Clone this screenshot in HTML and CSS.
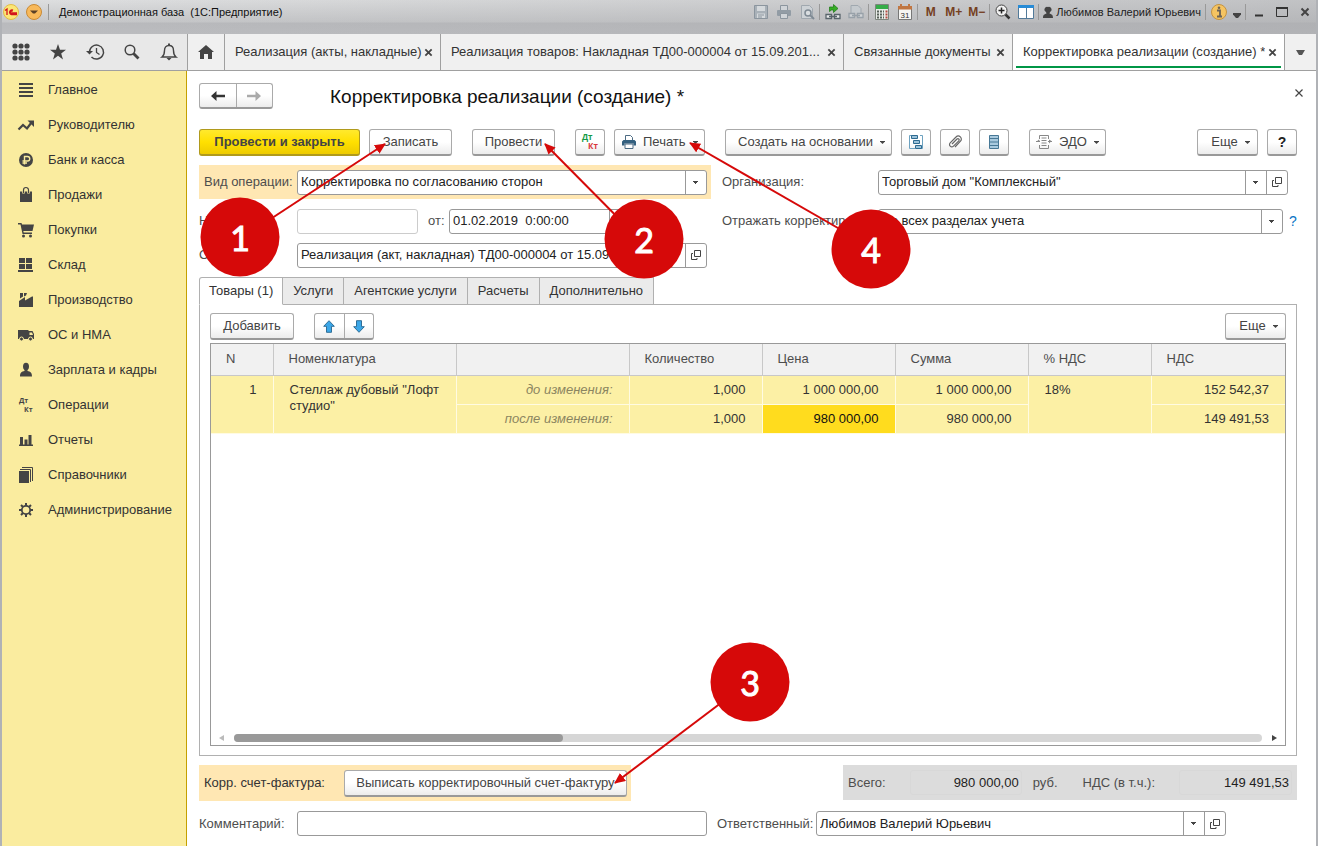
FILE: index.html
```html
<!DOCTYPE html>
<html lang="ru">
<head>
<meta charset="utf-8">
<title>Демонстрационная база (1С:Предприятие)</title>
<link rel="stylesheet" href="styles.css">
</head>
<body>
<svg class="defs" width="0" height="0" aria-hidden="true">
  <symbol id="caret" viewBox="0 0 5 3"><path d="M0 0h5v.5L2.500 3 0 .5z" fill="#444"/></symbol>
  <symbol id="open" viewBox="0 0 10 10"><path d="M3.500.5h6v6h-6zM2 3.500H.5v6h5.500V8" fill="none" stroke="#444"/></symbol>
  <symbol id="cross" viewBox="0 0 10 10"><path d="M1.500 1.500l7 7M8.500 1.500l-7 7" fill="none" stroke="#444" stroke-width="2"/></symbol>
</svg>

<div class="window">
  <header class="titlebar">
    <div class="title-row">
      <svg width="16" height="16" viewBox="0 0 16 16"><circle cx="8" cy="8" r="7.500" fill="#fbe675" stroke="#e3bd45"/><path d="M2 6.500l2-1.500v6M10 6.200a2.300 2.300 0 1 0-1.500 4.300H14M9.500 7.500a1 1 0 1 0-.5 1.500h5" fill="none" stroke="#d3141b" stroke-width="1.300"/></svg>
      <button class="app-menu" aria-label="Главное меню"><svg width="16" height="16" viewBox="0 0 16 16"><circle cx="8" cy="8" r="7.500" fill="#f8b95a" stroke="#c98a35"/><path d="M4 6.500h8l-3 3H7z" fill="#5a4026"/></svg></button>
      <i class="sep"></i>
      <span class="app-title">Демонстрационная база&nbsp; (1С:Предприятие)</span>
      <div class="tools">
        <button aria-label="Сохранить"><svg width="16" height="16" viewBox="0 0 16 16"><path d="M1.500 1.500h13v13h-13z" fill="#a9b1b8" stroke="#8b959e"/><path d="M4 2h8v5H4zM4 9.500h8V14H4z" fill="#d5d9dc"/><path d="M5 11h6M5 13h4" stroke="#8b959e"/></svg></button>
        <button aria-label="Печать"><svg width="16" height="16" viewBox="0 0 16 16"><path d="M4.500 6V1.500h7V6" fill="#d0d4d8" stroke="#8b959e"/><rect x="1" y="6" width="14" height="6" rx="1" fill="#929ca5"/><path d="M4.500 9.500h7v5h-7z" fill="#d0d4d8" stroke="#8b959e"/></svg></button>
        <button aria-label="Просмотр"><svg width="16" height="16" viewBox="0 0 16 16"><path d="M2.500 1.500h8l3 3v10h-11z" fill="#cdd2d6" stroke="#a0a8af"/><circle cx="9" cy="9" r="3" fill="#d9dde0" stroke="#7f8a94" stroke-width="1.500"/><path d="M11 11l4 4" stroke="#7f8a94" stroke-width="2"/></svg></button>
        <i class="sep"></i>
        <button aria-label="Получить ссылку"><svg width="16" height="16" viewBox="0 0 16 16"><path d="M4.500 3h4V.5l4.500 4-4.500 4V6h-2l-2 1.500z" fill="#36ad25" stroke="#187512" stroke-width=".7"/><path d="M1 10.500h5.500v4H1zM9.500 10.500H15v4H9.500z" fill="#e8eaeb" stroke="#59646b" stroke-width="1.300"/><path d="M4 12.500h8" stroke="#59646b" stroke-width="1.500"/></svg></button>
        <button aria-label="Перейти по ссылке"><svg width="16" height="16" viewBox="0 0 16 16"><path d="M3 9V1.500h7l3 3V9" fill="#c5cace" stroke="#a0a8af"/><path d="M1 9.500h5.500v4H1zM9.500 9.500H15v4H9.500zM4 11.500h8" fill="#d0d4d7" stroke="#98a1a9" stroke-width="1.300"/></svg></button>
        <i class="sep"></i>
        <button aria-label="Калькулятор"><svg width="14" height="16" viewBox="0 0 14 16"><path d="M.5.5h13v15H.5z" fill="#e8ece8" stroke="#7d857d"/><path d="M1 1h12v4H1z" fill="#35ad49"/><path d="M2 7.500h7M2 10.500h7M2 13.500h7" stroke="#58615a" stroke-width="2" stroke-dasharray="2 1"/><path d="M11.500 6.500v8" stroke="#b54b42" stroke-width="2" stroke-dasharray="2 1"/></svg></button>
        <button aria-label="Календарь"><svg width="14" height="16" viewBox="0 0 14 16"><path d="M.5 2.500h13v13H.5z" fill="#f5f5f3" stroke="#777"/><path d="M0 2h14v3.500H0zM2 0h2v3H2zM10 0h2v3h-2z" fill="#c07642"/><text x="7" y="13.500" text-anchor="middle" font-size="8" font-family="Liberation Sans" fill="#333">31</text></svg></button>
        <i class="sep"></i>
        <button class="mem">M</button><button class="mem">M+</button><button class="mem">M−</button>
        <i class="sep"></i>
        <button aria-label="Масштаб"><svg width="16" height="16" viewBox="0 0 16 16"><circle cx="6.500" cy="6.500" r="5.500" fill="#f2f2f2" stroke="#444"/><path d="M3.500 6.500h6M6.500 3.500v6" stroke="#222" stroke-width="1.500"/><path d="M10.500 10.500l4 4" stroke="#333" stroke-width="2.500"/></svg></button>
        <button aria-label="Панели"><svg width="16" height="16" viewBox="0 0 16 16"><path d="M.5 1.500h15v13H.5z" fill="#fff" stroke="#527a99"/><path d="M0 1h16v3H0z" fill="#278bd6"/><path d="M8.500 4v10" stroke="#527a99"/></svg></button>
        <i class="sep"></i>
        <button class="user"><svg width="10" height="11" viewBox="0 0 10 11"><path d="M5 0a2.700 2.700 0 0 1 2 5l-.500 1.500C8 7.500 10 7 10 11H0c0-4 2-3.500 3.500-4.500L3 5a2.700 2.700 0 0 1 2-5z" fill="#444"/></svg>Любимов Валерий Юрьевич</button>
        <i class="sep"></i>
        <button aria-label="Информация"><svg width="16" height="16" viewBox="0 0 16 16"><circle cx="8" cy="8" r="7.500" fill="#f5c462" stroke="#c49341"/><path d="M6 6.500h3V12M6 12.500h5" fill="none" stroke="#6b6257" stroke-width="1.800"/><circle cx="8" cy="3.800" r="1.300" fill="#6b6257"/></svg></button>
        <button class="narrow" aria-label="Ещё"><svg width="8" height="5" viewBox="0 0 8 5"><path d="M0 0h8v1.500L5 5H3L0 1.500z" fill="#444"/></svg></button>
        <i class="sep"></i>
        <button aria-label="Свернуть"><svg width="10" height="10" viewBox="0 0 10 10"><path d="M1 8.500h8" stroke="#333" stroke-width="2"/></svg></button>
        <button aria-label="Развернуть"><svg width="12" height="10" viewBox="0 0 12 10"><path d="M.5 1h11v8.500H.5z" fill="none" stroke="#333"/><path d="M0 1h12" stroke="#333" stroke-width="2"/></svg></button>
        <button aria-label="Закрыть"><svg width="10" height="10"><use href="#cross"/></svg></button>
      </div>
    </div>
  </header>

  <nav class="tabbar" aria-label="Открытые окна">
    <div class="quick">
      <button aria-label="Меню функций"><svg width="18" height="18" viewBox="0 0 18 18" fill="#444"><circle cx="3" cy="3" r="2.600"/><circle cx="9" cy="3" r="2.600"/><circle cx="15" cy="3" r="2.600"/><circle cx="3" cy="9" r="2.600"/><circle cx="9" cy="9" r="2.600"/><circle cx="15" cy="9" r="2.600"/><circle cx="3" cy="15" r="2.600"/><circle cx="9" cy="15" r="2.600"/><circle cx="15" cy="15" r="2.600"/></svg></button>
      <button aria-label="Избранное"><svg width="16" height="16" viewBox="0 0 16 16"><path d="M8 0l2 5.800h6l-4.800 3.600L13 15.500l-5-3.700-5 3.700 1.800-6.100L0 5.800h6z" fill="#444"/></svg></button>
      <button aria-label="История"><svg width="18" height="16" viewBox="0 0 18 16"><path d="M3.500 8a7 7 0 1 1 2 5" fill="none" stroke="#444" stroke-width="1.500"/><path d="M0 7h7L3.500 10.500z" fill="#444"/><path d="M10.500 4v4.500l3 2" fill="none" stroke="#444" stroke-width="1.300"/></svg></button>
      <button aria-label="Поиск"><svg width="16" height="16" viewBox="0 0 16 16"><circle cx="6" cy="6" r="4.800" fill="none" stroke="#444" stroke-width="1.500"/><path d="M9.500 9.500l5 5" stroke="#444" stroke-width="2.800"/></svg></button>
      <button aria-label="Оповещения"><svg width="16" height="18" viewBox="0 0 16 18"><path d="M8 2.500c-3 0-4.500 2-4.500 5 0 3.500-.5 5-2.500 6.500h14c-2-1.500-2.500-3-2.500-6.500 0-3-1.500-5-4.500-5z" fill="none" stroke="#444" stroke-width="1.400"/><path d="M7 .5h2v2H7zM5.500 15h5L8 17.500z" fill="#444"/></svg></button>
    </div>
    <button class="home" aria-label="Начальная страница"><svg width="16" height="14" viewBox="0 0 16 14"><path d="M8 0L0 7h2v7h4V9h4v5h4V7h2z" fill="#444"/></svg></button>
    <div class="tab t1"><a href="#">Реализация (акты, накладные)</a><button aria-label="Закрыть"><svg width="9" height="9"><use href="#cross"/></svg></button></div>
    <div class="tab t2"><a href="#">Реализация товаров: Накладная ТД00-000004 от 15.09.201...</a><button aria-label="Закрыть"><svg width="9" height="9"><use href="#cross"/></svg></button></div>
    <div class="tab t3"><a href="#">Связанные документы</a><button aria-label="Закрыть"><svg width="9" height="9"><use href="#cross"/></svg></button></div>
    <div class="tab t4 active"><a href="#">Корректировка реализации (создание) *</a><button aria-label="Закрыть"><svg width="9" height="9"><use href="#cross"/></svg></button></div>
    <button class="tablist" aria-label="Список окон"><svg width="9" height="5" viewBox="0 0 9 5"><path d="M0 0h9L6 5H3z" fill="#555"/></svg></button>
  </nav>

  <div class="body">
    <nav class="sidebar" aria-label="Разделы">
      <a href="#"><svg viewBox="0 0 16 16"><path d="M1 2h14M1 6h14M1 10h14M1 14h14" stroke="#444" stroke-width="2"/></svg>Главное</a>
      <a href="#"><svg viewBox="0 0 16 16"><path d="M.5 12.500L5 8l4 3.500 4.500-6" fill="none" stroke="#444" stroke-width="2.200"/><path d="M9.500 3.500H16V10z" fill="#444"/></svg>Руководителю</a>
      <a href="#"><svg viewBox="0 0 16 16"><circle cx="8" cy="8" r="7" fill="#444"/><path d="M6.500 12.500V4.500h3a2.200 2.200 0 0 1 0 4.500H4.500M4.500 11H9" fill="none" stroke="#faec9f" stroke-width="1.400"/></svg>Банк и касса</a>
      <a href="#"><svg viewBox="0 0 16 16"><path d="M2 4.500h12V15H2z" fill="#444"/><path d="M5.500 6.500V3a2.500 2.500 0 0 1 5 0v3.500" fill="none" stroke="#faec9f" stroke-width="2.600"/><path d="M5.500 6V3a2.500 2.500 0 0 1 5 0v3" fill="none" stroke="#444" stroke-width="1.200"/></svg>Продажи</a>
      <a href="#"><svg viewBox="0 0 16 16"><path d="M0 1h3.500l.5 1.500h12L14.500 9H5.300l.4 1.500H14V12H4.500L2.500 2.500H0z" fill="#444"/><circle cx="5.500" cy="14" r="1.500" fill="#444"/><circle cx="12.500" cy="14" r="1.500" fill="#444"/></svg>Покупки</a>
      <a href="#"><svg viewBox="0 0 16 16"><path d="M1 1h6v5H1zM8 1h6v5H8zM1 7h6v5H1zM8 7h6v5H8zM0 13h15v2H0z" fill="#444"/></svg>Склад</a>
      <a href="#"><svg viewBox="0 0 16 16"><path d="M1 15V9l6-4v3.500L14 4.500h1V15zM2 1h3v3.500L2 6.500zM6 1h3l-1 2.500-2 1z" fill="#444"/></svg>Производство</a>
      <a href="#"><svg viewBox="0 0 16 16"><path d="M0 3h10.500v9H0zM10 4h4.500L16 7v5h-6z" fill="#444"/><path d="M11.500 5.500h2.500L15 8h-3.500z" fill="#faec9f"/><g fill="#444" stroke="#faec9f"><circle cx="3.500" cy="12" r="2"/><circle cx="12.500" cy="12" r="2"/></g></svg>ОС и НМА</a>
      <a href="#"><svg viewBox="0 0 16 16"><ellipse cx="8" cy="4.500" rx="3" ry="3.800" fill="#444"/><path d="M6.500 7h3v2c3 .5 4.500 1.500 4.500 5.500H2C2 10.500 3.500 9.500 6.500 9z" fill="#444"/></svg>Зарплата и кадры</a>
      <a href="#"><svg viewBox="0 0 16 16" font-family="Open Sans, sans-serif" font-size="7" font-weight="700" fill="#444"><text x="1" y="6">Дт</text><text x="6" y="15">Кт</text></svg>Операции</a>
      <a href="#"><svg viewBox="0 0 16 16"><path d="M1 12.500h14V14H1zM2 5h3v7.500H2zM6.500 7.500h3v5h-3zM10.500 3h3v9.500h-3z" fill="#444"/></svg>Отчеты</a>
      <a href="#"><svg viewBox="0 0 16 16"><path d="M1 4h10v12H1z" fill="#444"/><path d="M2 2.500h10.500V15M4 .5h10.500V14" fill="none" stroke="#444"/></svg>Справочники</a>
      <a href="#"><svg viewBox="0 0 16 16"><circle cx="8" cy="8" r="4.200" fill="none" stroke="#444" stroke-width="1.800"/><path d="M8 1v3M8 12v3M1 8h3M12 8h3M3 3l2 2M11 11l2 2M13 3l-2 2M5 11l-2 2" stroke="#444" stroke-width="2"/></svg>Администрирование</a>
    </nav>

    <main class="form">
      <div class="heading">
        <div class="pair nav-pair">
          <button aria-label="Назад"><svg width="14" height="10" viewBox="0 0 14 10"><path d="M0 5l5.500-5v3.800H14v2.400H5.500V10z" fill="#333"/></svg></button>
          <button aria-label="Вперед"><svg width="14" height="10" viewBox="0 0 14 10"><path d="M14 5L8.500 0v3.800H0v2.400h8.500V10z" fill="#aaa"/></svg></button>
        </div>
        <h1>Корректировка реализации (создание) *</h1>
        <button class="close" aria-label="Закрыть"><svg width="8" height="8" viewBox="0 0 8 8"><path d="M.5.5l7 7M7.500.5l-7 7" stroke="#444" stroke-width="1.200"/></svg></button>
      </div>

      <div class="commands">
        <button class="btn primary">Провести и закрыть</button>
        <button class="btn w84">Записать</button>
        <button class="btn w84 apart">Провести</button>
        <button class="btn sq apart" aria-label="Дт Кт"><svg width="18" height="18" viewBox="0 0 18 18" font-family="Open Sans, sans-serif" font-size="8" font-weight="700"><text x="1" y="7" fill="#159a46">Дт</text><text x="7" y="16" fill="#d9363a">Кт</text></svg></button>
        <button class="btn print"><svg width="14" height="14" viewBox="0 0 14 14"><path d="M3.500 6V.5h5l2 2V6" fill="#fff" stroke="#4c6b83"/><path d="M1.500 5h11L14 6.500v4h-2.500v-2h-9v2H0v-4z" fill="#34607f"/><path d="M3 9h8v4.500H3z" fill="#fff" stroke="#4c6b83"/></svg>Печать<svg class="caret"><use href="#caret"/></svg></button>
        <button class="btn create apart">Создать на основании<svg class="caret"><use href="#caret"/></svg></button>
        <button class="btn sq" aria-label="Структура подчиненности"><svg width="16" height="16" viewBox="0 0 16 16"><path d="M4 1.500H1.500v13H7M12 1.500h2.500v13H13" fill="none" stroke="#6da2c0"/><g fill="#9cc3da" stroke="#2e6a90"><path d="M3.500 1.500h6v3h-6zM5.500 6.500h6v3h-6zM7.500 11.500h6v3h-6z"/></g></svg></button>
        <button class="btn sq" aria-label="Файлы"><svg width="14" height="14" viewBox="0 0 14 14"><path d="M4 9l5-5a1.200 1.200 0 0 1 1.800 1.800l-5.300 5.300a2.300 2.300 0 0 1-3.300-3.300L8 2a3 3 0 0 1 4.500 4.200L7 12" fill="none" stroke="#666" stroke-width="1.200"/></svg></button>
        <button class="btn sq" aria-label="Список"><svg width="12" height="14" viewBox="0 0 12 14"><path d="M1.500.5h9v13h-9z" fill="#a9cadf" stroke="#477896"/><path d="M1.500 3.500h9M1.500 7h9M1.500 10.500h9" stroke="#477896"/></svg></button>
        <button class="btn edo apart"><svg width="16" height="14" viewBox="0 0 16 14"><path d="M3.500 4V.5h9V4M3.500 10v3.500h9V10M5.500 3h5M5.500 5.500h5M5.500 8h5M5.500 10.500h5M0 6.500h4M12 6.500h4" fill="none" stroke="#888"/><path d="M3 4.500L0 7h4zM13 4.500v4L15.500 6z" fill="#888"/></svg>ЭДО<svg class="caret"><use href="#caret"/></svg></button>
        <button class="btn more push">Еще<svg class="caret"><use href="#caret"/></svg></button>
        <button class="btn sq help">?</button>
      </div>

      <div class="fields">
        <div class="line hot">
          <label for="op">Вид операции:</label>
          <div class="field arrow"><select id="op"><option>Корректировка по согласованию сторон</option></select></div>
        </div>
        <div class="line">
          <label class="wide" for="org">Организация:</label>
          <div class="field arrow org"><select id="org"><option>Торговый дом "Комплексный"</option></select><button aria-label="Открыть"><svg width="10" height="10"><use href="#open"/></svg></button></div>
        </div>
        <div class="line left">
          <label for="num">Номер:</label>
          <div class="field pale"><input id="num" type="text"></div>
          <label class="from" for="date">от:</label>
          <div class="field date"><input id="date" type="text" value="01.02.2019  0:00:00"><button aria-label="Календарь"><svg class="caret"><use href="#caret"/></svg></button></div>
        </div>
        <div class="line">
          <label class="wide" for="sect">Отражать корректировку:</label>
          <div class="field arrow"><select id="sect"><option>Во всех разделах учета</option></select></div>
          <a class="hint" href="#" aria-label="Справка">?</a>
        </div>
        <div class="line left">
          <label for="base">Основание:</label>
          <div class="field"><input id="base" type="text" value="Реализация (акт, накладная) ТД00-000004 от 15.09.2018"><button aria-label="Открыть"><svg width="10" height="10"><use href="#open"/></svg></button></div>
        </div>
      </div>

      <div class="pages" role="tablist">
        <button role="tab" aria-selected="true" class="on">Товары (1)</button><button role="tab">Услуги</button><button role="tab">Агентские услуги</button><button role="tab">Расчеты</button><button role="tab">Дополнительно</button>
      </div>

      <section class="panel">
        <div class="panel-bar">
          <button class="btn w84">Добавить</button>
          <div class="pair move-pair">
            <button aria-label="Вверх"><svg width="12" height="13" viewBox="0 0 12 13"><path d="M6 .7l5.300 5.600H8.500v6h-5v-6H.7z" fill="#3ba7e8" stroke="#2f6f98"/></svg></button>
            <button aria-label="Вниз"><svg width="12" height="13" viewBox="0 0 12 13"><path d="M6 12.300l5.300-5.600H8.500v-6h-5v6H.7z" fill="#3ba7e8" stroke="#2f6f98"/></svg></button>
          </div>
          <button class="btn more push">Еще<svg class="caret"><use href="#caret"/></svg></button>
        </div>
        <div class="grid">
          <table>
            <colgroup><col class="c-n"><col class="c-name"><col class="c-kind"><col class="c-num"><col class="c-num"><col class="c-num"><col class="c-rate"><col></colgroup>
            <thead><tr><th>N</th><th>Номенклатура</th><th></th><th>Количество</th><th>Цена</th><th>Сумма</th><th>% НДС</th><th>НДС</th></tr></thead>
            <tbody>
              <tr><td rowspan="2" class="r">1</td><td rowspan="2">Стеллаж дубовый "Лофт студио"</td><td class="kind">до изменения:</td><td class="r">1,000</td><td class="r">1 000 000,00</td><td class="r">1 000 000,00</td><td rowspan="2">18%</td><td class="r">152 542,37</td></tr>
              <tr><td class="kind">после изменения:</td><td class="r">1,000</td><td class="r current">980 000,00</td><td class="r">980 000,00</td><td class="r">149 491,53</td></tr>
            </tbody>
          </table>
          <div class="scroll">
            <svg width="5" height="6" viewBox="0 0 5 6"><path d="M5 0v6L0 3z" fill="#bbb"/></svg>
            <div class="track"><div class="thumb"></div></div>
            <svg width="5" height="6" viewBox="0 0 5 6"><path d="M0 0v6l5-3z" fill="#444"/></svg>
          </div>
        </div>
      </section>

      <div class="summary">
        <div class="invoice"><span>Корр. счет-фактура:</span><button class="btn issue">Выписать корректировочный счет-фактуру</button></div>
        <div class="totals">
          <label for="total">Всего:</label><input id="total" class="sum" type="text" readonly value="980 000,00"><span class="cur">руб.</span>
          <label for="vat">НДС (в т.ч.):</label><input id="vat" class="vat" type="text" readonly value="149 491,53">
        </div>
      </div>

      <div class="footer">
        <label for="note">Комментарий:</label>
        <div class="field note"><input id="note" type="text"></div>
        <label class="resp" for="resp">Ответственный:</label>
        <div class="field arrow person"><select id="resp"><option>Любимов Валерий Юрьевич</option></select><button aria-label="Открыть"><svg width="10" height="10"><use href="#open"/></svg></button></div>
      </div>
    </main>
  </div>

  <svg class="callouts" width="1318" height="846" viewBox="0 0 1318 846">
    <defs><marker id="head" markerUnits="userSpaceOnUse" markerWidth="12" markerHeight="12" refX="10" refY="5" orient="auto"><path d="M0 0l11 5L0 10z" fill="#d60909"/></marker></defs>
    <g stroke="#d60909" stroke-width="2" marker-end="url(#head)">
      <path d="M240 239L385 144"/><path d="M644 244L545 144"/><path d="M750 681L615 783"/><path d="M871 247L690 143"/>
    </g>
    <g fill="#d60909"><circle cx="240" cy="237" r="39.500"/><circle cx="644" cy="239" r="39.500"/><circle cx="750" cy="682" r="39.500"/><circle cx="871" cy="249" r="39.500"/></g>
    <g class="digits"><text x="240" y="251">1</text><text x="644" y="253">2</text><text x="750" y="696">3</text><text x="871" y="263">4</text></g>
  </svg>
</div>
</body>
</html>
```
FILE: styles.css
```css
* { box-sizing: border-box; }
body { margin: 0; font: 13px/16px "Liberation Sans", Arial, sans-serif; color: #333; background: #fff; }
button, input, select { font: inherit; color: inherit; margin: 0; padding: 0; border: 0; background: none; }
a { color: inherit; text-decoration: none; }
svg { flex: none; overflow: visible; }
.defs { position: absolute; }
.caret { width: 5px; height: 3px; }

.window { position: relative; display: flex; flex-direction: column; min-height: 100vh; border-left: 2px solid #b0b2b6; border-right: 2px solid #b0b2b6; }

/* Window caption */
.titlebar { height: 34px; background: linear-gradient(90deg, #d0d1d300, #a8a9ac88), linear-gradient(#dedfe0 0, #c6c7c9 22px, #b9babd 23px, #bcbdc0); }
.title-row { display: flex; align-items: center; height: 24px; padding-left: 1px; color: #222; font-size: 11px; }
.app-menu { display: flex; margin: 0 6px 0 7px; }
.sep { flex: none; width: 1px; height: 16px; background: #999; }
.app-title { margin-left: 10px; color: #111; white-space: nowrap; }
.tools { display: flex; align-items: center; margin-left: auto; }
.tools button { display: flex; align-items: center; justify-content: center; width: 23px; height: 20px; }
.tools .sep { margin: 0 1px; }
.tools .narrow { width: 14px; padding-top: 6px; }
.tools .mem { font-weight: 700; font-size: 12px; color: #75401f; }
.tools .user { width: auto; gap: 3px; padding: 0 3px; white-space: nowrap; }

/* Open windows */
.tabbar { display: flex; height: 37px; background: #f0f0f0; border-bottom: 1px solid #a0a0a0; }
.tabbar > * { border-right: 1px solid #a0a0a0; }
.quick { display: flex; flex: none; width: 186px; background: #e8e8e8; }
.quick button { display: flex; flex: 1; align-items: center; justify-content: center; }
.home { display: flex; flex: none; width: 37px; align-items: center; justify-content: center; }
.tab { display: flex; align-items: center; justify-content: space-between; padding: 0 7px 0 10px; white-space: nowrap; min-width: 0; }
.tab a { overflow: hidden; text-overflow: ellipsis; }
.tab button { display: flex; flex: none; }
.t1 { flex: 0 1 216px; }
.t2 { flex: 0 1 403px; }
.t3 { flex: 0 1 169px; }
.t4 { flex: 1 1 200px; }
.active { background: linear-gradient(#009646, #009646) 3px 32px / calc(100% - 6px) 2px no-repeat #fff; }
.tablist { display: flex; flex: none; width: 31px; align-items: center; justify-content: center; border-right: 0; }

.body { display: flex; flex: 1; }

/* Sections */
.sidebar { flex: none; width: 185px; padding-top: 1px; background: #faec9f; border-right: 1px solid #c4a000; }
.sidebar a { display: flex; align-items: center; height: 35px; gap: 14px; padding-left: 16px; }
.sidebar svg { width: 16px; height: 16px; }

/* Form */
.form { display: flex; flex: 1; flex-direction: column; min-width: 0; padding: 12px 19px 10px 12px; }
.heading { display: flex; align-items: center; height: 26px; }
h1 { margin: 2px 0 0 57px; font: 19px/24px "Liberation Sans", Arial, sans-serif; color: #111; }
.close { display: flex; align-self: flex-start; margin: 6px -6px 0 auto; }
.pair { display: flex; border: 1px solid #aaa; border-bottom: 2px solid #999; border-radius: 3px; background: linear-gradient(#fff 50%, #ececec); }
.pair button { display: flex; flex: 1; align-items: center; justify-content: center; }
.pair button + button { border-left: 1px solid #aaa; }
.nav-pair { width: 74px; height: 26px; }
.move-pair { width: 60px; height: 27px; margin-left: 20px; }

.btn { display: flex; flex: none; align-items: center; justify-content: center; height: 27px; padding: 0 13px; white-space: nowrap; color: #444; border: 1px solid #aaa; border-bottom: 2px solid #999; border-radius: 3px; background: linear-gradient(#fff 50%, #ececec); }
.commands { display: flex; gap: 9px; margin-top: 20px; }
.apart { margin-left: 11px; }
.push { margin-left: auto; }
.primary { width: 161px; font-weight: 700; background: linear-gradient(#ffe92e, #ffe000 50%, #eecb00); border-color: #b09a1c; }
.w84 { width: 84px; }
.commands .w84 { width: 83px; }
.sq { width: 30px; padding: 0; }
.help { font-weight: 700; color: #222; font-size: 14px; }
.print { width: 91px; gap: 7px; padding: 0 0 0 7px; justify-content: flex-start; }
.create { width: 167px; gap: 7px; padding: 0 6px 0 12px; }
.edo { width: 77px; gap: 7px; padding: 0; }
.more { width: 61px; gap: 7px; padding: 0 6px 0 12px; }
.issue { width: 283px; padding: 0; }

.fields { display: grid; grid-template-columns: minmax(0, 512fr) minmax(0, 575fr); column-gap: 11px; margin-top: 9px; }
.line { display: flex; align-items: center; height: 34px; color: #4d4d4d; }
.line > label { flex: none; width: 98px; white-space: nowrap; }
.line > .wide { width: 156px; }
.hot { padding: 0 4px 0 5px; background: #ffe7b3; }
.line.hot > label { width: 93px; }
.left { padding-right: 4px; }
.fields .line:nth-child(3), .fields .line:nth-child(4) { margin-top: 5px; }
.org { margin-right: 9px; }

.field { display: flex; flex: 1; min-width: 0; height: 25px; color: #222; border: 1px solid #999; border-radius: 3px; background: #fff; }
.field input, .field select { flex: 1; min-width: 0; width: 0; padding: 0 3px; appearance: none; white-space: pre; outline: 0; }
.field button { display: flex; flex: none; align-items: center; justify-content: center; width: 21px; border-left: 1px solid #999; }
.arrow select {
  background:
    linear-gradient(#999, #999) right 20px top 0 / 1px 100% no-repeat,
    linear-gradient(#444, #444) right 8px top 10px / 5px 1px no-repeat,
    linear-gradient(#444, #444) right 9px top 11px / 3px 1px no-repeat,
    linear-gradient(#444, #444) right 10px top 12px / 1px 1px no-repeat;
}
.pale { flex: 0 0 121px; border-color: #ccc; }
.line > .from { width: 31px; padding-left: 10px; }
.date { flex: 0 0 182px; }
.hint { width: 14px; padding-left: 6px; color: #0a74c4; font-size: 14px; }

/* Form pages */
.pages { display: flex; height: 28px; margin-top: 5px; }
.pages button { padding: 0 10px; color: #333; background: #ebebeb; border: 1px solid #b0b0b0; border-left: 0; }
.pages .on { position: relative; z-index: 1; padding: 0 9px; background: #fff; border-left: 1px solid #b0b0b0; border-bottom-color: #fff; border-radius: 3px 0 0; }
.panel { display: flex; flex: 1; flex-direction: column; min-height: 300px; margin-top: -1px; padding: 8px 10px 9px; border: 1px solid #b0b0b0; }
.panel-bar { display: flex; margin-bottom: 3px; }
.grid { display: flex; flex: 1; flex-direction: column; justify-content: space-between; border: 1px solid #999; }
table { width: 100%; table-layout: fixed; border-collapse: collapse; }
.c-n { width: 62px; } .c-name { width: 183px; } .c-kind { width: 173px; } .c-num { width: 133px; } .c-rate { width: 123px; }
th { height: 31px; padding: 0 15px; font-weight: 400; text-align: left; color: #4d4d4d; background: #f1f1f1; border-right: 1px solid #c8c8c8; border-bottom: 1px solid #c8c8c8; }
td { height: 28px; padding: 6px 16px; vertical-align: top; color: #333; background: #fcf0a5; border-right: 1px solid #fffbe2; border-bottom: 1px solid #fffbe2; }
th:last-child, td:last-child { border-right: 0; }
.r { text-align: right; }
.kind { font-style: italic; text-align: right; color: #8b8560; }
.current { background: #ffdc1e; color: #111; }
.scroll { display: flex; align-items: center; gap: 10px; height: 14px; padding: 0 8px; }
.track { flex: 1; height: 8px; border-radius: 4px; background: #d6d6d6; }
.thumb { width: 32%; height: 8px; border-radius: 4px; background: #999; }

.summary { display: flex; justify-content: space-between; margin-top: 9px; }
.invoice { display: flex; align-items: center; height: 36px; gap: 19px; padding: 0 4px 0 5px; background: #ffe7b3; }
.totals { display: flex; align-items: center; height: 35px; padding: 0 5px; color: #4d4d4d; background: #dcdcdc; }
.totals input { height: 25px; margin-left: 24px; padding-right: 2px; text-align: right; color: #222; border: 1px solid #d8d8d8; border-radius: 3px; }
.sum { width: 112px; }
.cur { margin: 0 25px 0 11px; }
.vat { width: 113px; }
.footer { display: flex; align-items: center; margin-top: 10px; color: #4d4d4d; }
.footer label { flex: none; width: 98px; }
.footer .resp { width: 109px; padding-left: 10px; }
.note, .person { flex: 0 1 410px; }

/* Numbered callouts over the form */
.callouts { position: absolute; left: -2px; top: 0; pointer-events: none; }
.digits { fill: #fff; stroke: #fff; stroke-width: 1px; font: 400 34px Lato, sans-serif; text-anchor: middle; }
```
